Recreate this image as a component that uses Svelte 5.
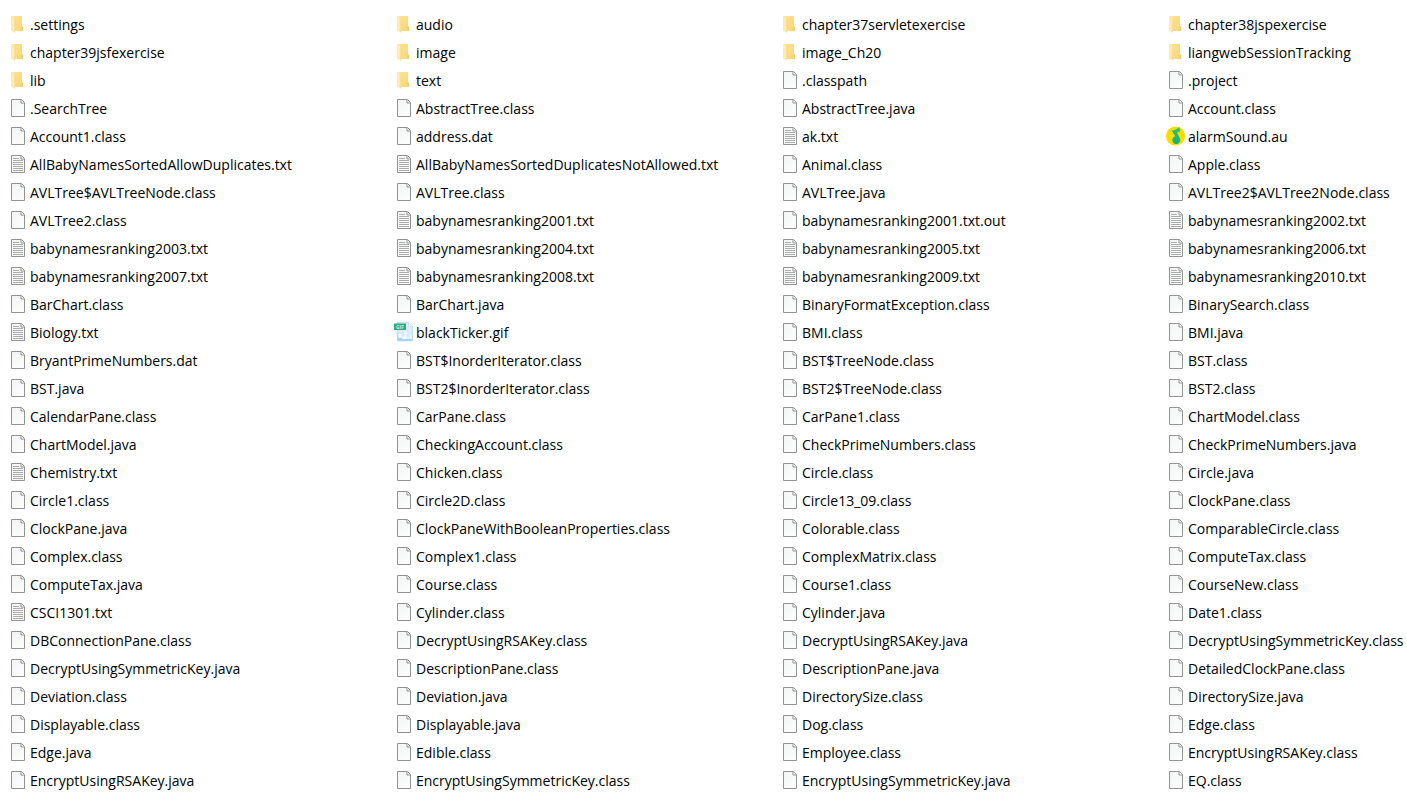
<script lang="ts">
  type Kind = 'folder' | 'text' | 'audio' | 'gif' | 'file';

  const folders = [
    '.settings', 'audio', 'chapter37servletexercise', 'chapter38jspexercise',
    'chapter39jsfexercise', 'image', 'image_Ch20', 'liangwebSessionTracking',
    'lib', 'text',
  ];

  const files = [
    '.classpath', '.project',
    '.SearchTree', 'AbstractTree.class', 'AbstractTree.java', 'Account.class',
    'Account1.class', 'address.dat', 'ak.txt', 'alarmSound.au',
    'AllBabyNamesSortedAllowDuplicates.txt', 'AllBabyNamesSortedDuplicatesNotAllowed.txt', 'Animal.class', 'Apple.class',
    'AVLTree$AVLTreeNode.class', 'AVLTree.class', 'AVLTree.java', 'AVLTree2$AVLTree2Node.class',
    'AVLTree2.class', 'babynamesranking2001.txt', 'babynamesranking2001.txt.out', 'babynamesranking2002.txt',
    'babynamesranking2003.txt', 'babynamesranking2004.txt', 'babynamesranking2005.txt', 'babynamesranking2006.txt',
    'babynamesranking2007.txt', 'babynamesranking2008.txt', 'babynamesranking2009.txt', 'babynamesranking2010.txt',
    'BarChart.class', 'BarChart.java', 'BinaryFormatException.class', 'BinarySearch.class',
    'Biology.txt', 'blackTicker.gif', 'BMI.class', 'BMI.java',
    'BryantPrimeNumbers.dat', 'BST$InorderIterator.class', 'BST$TreeNode.class', 'BST.class',
    'BST.java', 'BST2$InorderIterator.class', 'BST2$TreeNode.class', 'BST2.class',
    'CalendarPane.class', 'CarPane.class', 'CarPane1.class', 'ChartModel.class',
    'ChartModel.java', 'CheckingAccount.class', 'CheckPrimeNumbers.class', 'CheckPrimeNumbers.java',
    'Chemistry.txt', 'Chicken.class', 'Circle.class', 'Circle.java',
    'Circle1.class', 'Circle2D.class', 'Circle13_09.class', 'ClockPane.class',
    'ClockPane.java', 'ClockPaneWithBooleanProperties.class', 'Colorable.class', 'ComparableCircle.class',
    'Complex.class', 'Complex1.class', 'ComplexMatrix.class', 'ComputeTax.class',
    'ComputeTax.java', 'Course.class', 'Course1.class', 'CourseNew.class',
    'CSCI1301.txt', 'Cylinder.class', 'Cylinder.java', 'Date1.class',
    'DBConnectionPane.class', 'DecryptUsingRSAKey.class', 'DecryptUsingRSAKey.java', 'DecryptUsingSymmetricKey.class',
    'DecryptUsingSymmetricKey.java', 'DescriptionPane.class', 'DescriptionPane.java', 'DetailedClockPane.class',
    'Deviation.class', 'Deviation.java', 'DirectorySize.class', 'DirectorySize.java',
    'Displayable.class', 'Displayable.java', 'Dog.class', 'Edge.class',
    'Edge.java', 'Edible.class', 'Employee.class', 'EncryptUsingRSAKey.class',
    'EncryptUsingRSAKey.java', 'EncryptUsingSymmetricKey.class', 'EncryptUsingSymmetricKey.java', 'EQ.class',
  ];

  function kindOf(name: string): Kind {
    if (name.endsWith('.txt')) return 'text';
    if (name.endsWith('.au')) return 'audio';
    if (name.endsWith('.gif')) return 'gif';
    return 'file';
  }

  const entries: { name: string; kind: Kind }[] = [
    ...folders.map((name) => ({ name, kind: 'folder' as Kind })),
    ...files.map((name) => ({ name, kind: kindOf(name) })),
  ];
</script>

<!-- gradients shared by every row icon -->
<svg class="defs" width="0" height="0" aria-hidden="true">
  <defs>
    <linearGradient id="folder-back" x1="0" y1="0" x2="1" y2="1">
      <stop offset="0" stop-color="#ffe394" />
      <stop offset="1" stop-color="#f7d675" />
    </linearGradient>
    <linearGradient id="paper" x1="0" y1="0" x2="1" y2="1">
      <stop offset="0" stop-color="#f3f5f5" />
      <stop offset="1" stop-color="#fdfdfd" />
    </linearGradient>
    <linearGradient id="picture" x1="0" y1="0" x2="0" y2="1">
      <stop offset="0" stop-color="#e9f6fc" />
      <stop offset="1" stop-color="#c4e4f6" />
    </linearGradient>
    <linearGradient id="note" x1="0" y1="0" x2="0" y2="1">
      <stop offset="0" stop-color="#2fc56f" />
      <stop offset="1" stop-color="#12b083" />
    </linearGradient>
  </defs>
</svg>

<main>
  <ul class="file-list">
    {#each entries as entry (entry.name)}
      <li class="file-list__item">
        <svg class="file-list__icon" viewBox="0 0 20 20" aria-hidden="true">
          {#if entry.kind === 'folder'}
            <path d="M4 2h10v10.500l1 .5v4H4z" fill="url(#folder-back)" />
            <path d="M13.500 12.500H15V17h-1.500z" fill="#f2cd68" />
            <path d="M3 2l4 1.500v15L3 17z" fill="#ffebb0" />
            <path d="M6.800 3.500v15" stroke="#f0d07a" stroke-width=".6" />
          {:else if entry.kind === 'audio'}
            <circle cx="9.500" cy="10" r="9.600" fill="#ffdc00" />
            <path
              d="M5.500 4.500c3-.2 5.500-1.300 7.800-3.500l1 4c-1 .9-2.200 1.500-3.300 1.800l3 5.700a4 4 0 1 1-4.800-2.300z"
              fill="url(#note)"
            />
          {:else if entry.kind === 'gif'}
            <path d="M3.500 .5h11l4 4v14.500h-15z" fill="url(#picture)" stroke="#b3d6ea" stroke-width=".7" />
            <path d="M14.500 .5v4h4z" fill="#fff" stroke="#b3d6ea" stroke-width=".6" />
            <path
              d="M5 11.500h2.500v3h3v-3H9.500l2-2.500 2 2.500h-1v4h3v-3h2v4.500H5z"
              fill="#fff"
              opacity=".8"
            />
            <path d="M4 18.500v-2.500l3-.5 3 2 4-1 4 .5v1.500z" fill="#91caea" opacity=".7" />
            <path d="M0 1.500h12v6.500H0z" fill="#2fab83" />
            <text class="file-list__tag" x="6" y="7" text-anchor="middle">GIF</text>
          {:else}
            <path d="M3.500 1.500H13.500l3 3v14h-13z" fill="url(#paper)" stroke="#929292" />
            <path d="M13 1.500V5h3.500" fill="#fff" stroke="#929292" />
            {#if entry.kind === 'text'}
              <path
                d="M5 4.500h6M5 6.500h10M5 8.500h10M5 10.500h10M5 12.500h10M5 14.500h10M5 16.500h10"
                stroke="#acacac"
              />
            {/if}
          {/if}
        </svg>
        <span class="file-list__name">{entry.name}</span>
      </li>
    {/each}
  </ul>
</main>

<style>
  :global(body) {
    background: #fff;
  }

  .defs {
    position: absolute;
  }

  .file-list {
    display: grid;
    grid-template-columns: repeat(3, minmax(0, 1fr)) 241px;
    margin: 0;
    padding: 10px 0 4px 8px;
    list-style: none;
    font-family: 'Segoe UI', 'Open Sans', 'Noto Sans', sans-serif;
    font-size: 14px;
    line-height: 26px;
    color: #000;
  }

  .file-list__item {
    display: flex;
    align-items: center;
    gap: 2px;
    height: 28px;
    min-width: 0;
  }

  .file-list__icon {
    flex: 0 0 20px;
    width: 20px;
    height: 20px;
    overflow: visible;
  }

  .file-list__tag {
    fill: #c4f0e0;
    font-size: 5px;
    font-weight: 700;
  }

  .file-list__name {
    padding-top: 2px;
    white-space: nowrap;
  }
</style>
